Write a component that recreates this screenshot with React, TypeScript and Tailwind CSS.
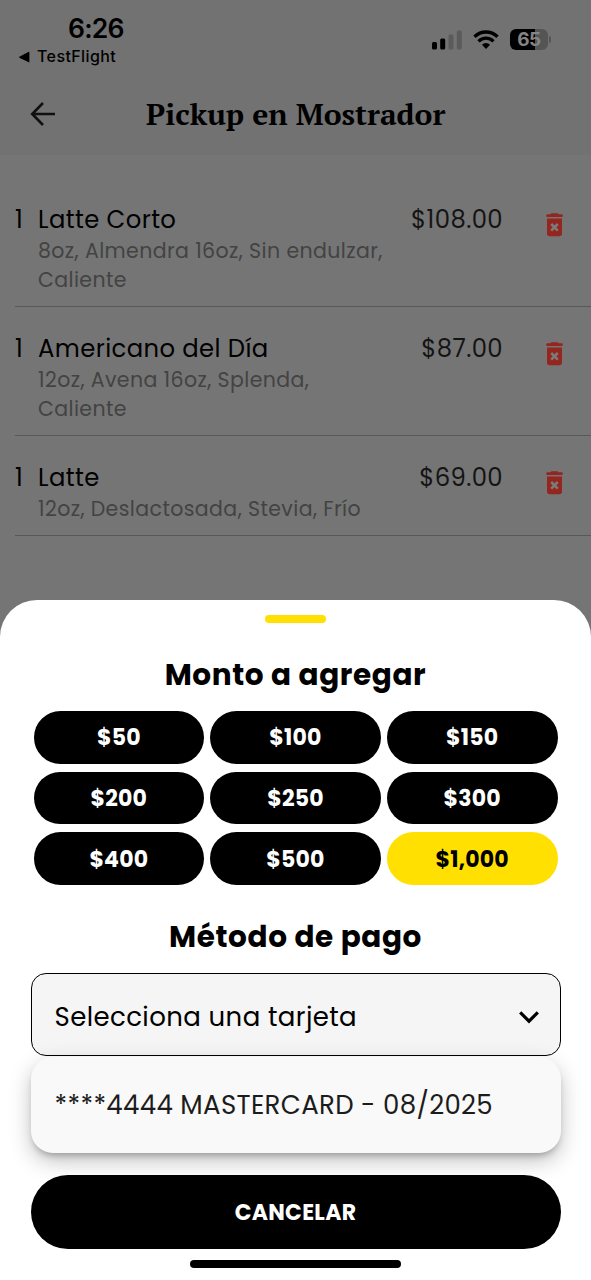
interface OrderItem {
  quantity: number;
  name: string;
  details: string[];
  price: string;
}

const items: OrderItem[] = [
  {
    quantity: 1,
    name: 'Latte Corto',
    details: ['8oz, Almendra 16oz, Sin endulzar,', 'Caliente'],
    price: '$108.00',
  },
  {
    quantity: 1,
    name: 'Americano del Día',
    details: ['12oz, Avena 16oz, Splenda,', 'Caliente'],
    price: '$87.00',
  },
  {
    quantity: 1,
    name: 'Latte',
    details: ['12oz, Deslactosada, Stevia, Frío'],
    price: '$69.00',
  },
];

const amounts = ['$50', '$100', '$150', '$200', '$250', '$300', '$400', '$500', '$1,000'];
const selectedAmount = '$1,000';

function StatusBar() {
  return (
    <div className="flex h-[72px] items-start justify-between pl-[19px] pr-[40px] font-['Inter',sans-serif]">
      <div className="pt-[12px]">
        <div className="pl-[49px] text-[26.5px] font-semibold leading-[32px] tracking-[-0.8px]">6:26</div>
        <div className="flex items-center gap-[7px] text-[16px] font-medium leading-[25px] tracking-[0.4px]">
          <svg width="11" height="12" viewBox="0 0 11 12">
            <path d="M10.4 1v10.400L.8 6.900q-1.200-.8 0-1.500L9.400 1q.6-.3 1 0z" fill="currentColor" />
          </svg>
          TestFlight
        </div>
      </div>
      <div className="flex items-center gap-[11px] pt-[29px]">
        {/* Signal */}
        <svg width="30" height="20" viewBox="0 0 30 20">
          <rect x="0" y="12" width="5" height="7.500" rx="1.500" />
          <rect x="8.200" y="8.500" width="5" height="11" rx="1.500" />
          <rect x="16.500" y="4.500" width="5" height="15" rx="1.500" fill="#5b5b5b" />
          <rect x="24.800" y="0.500" width="5" height="19" rx="1.500" fill="#5b5b5b" />
        </svg>
        {/* Wifi */}
        <svg width="26" height="20" viewBox="0 0 26 20" fill="none" stroke="currentColor">
          <path d="M1.500 6.700a16.300 16.300 0 0 1 23 0" strokeWidth="3.400" />
          <path d="M5.500 11.300a10.600 10.600 0 0 1 15 0" strokeWidth="3.200" />
          <path d="M13 19l-4-4.200a5.600 5.600 0 0 1 8 0z" fill="currentColor" stroke="none" />
        </svg>
        {/* Battery */}
        <div className="flex items-center gap-[1px]">
          <div className="flex h-[21px] w-[38px] items-center justify-center rounded-[6px] bg-[linear-gradient(90deg,#000_65%,#555_65%)] text-[19px] font-bold leading-none tracking-[-0.5px] text-[#848484]">
            65
          </div>
          <div className="h-[7px] w-[2px] rounded-r-full bg-[#555]" />
        </div>
      </div>
    </div>
  );
}

function TrashIcon() {
  return (
    <svg width="17" height="24" viewBox="0 0 17 24" fill="none">
      <path d="M4.500 1.300Q4.800.3 5.800.3h5.400q1 0 1.300 1h3.300q1 0 1 1.400t-1 1.300H1.200q-1 0-1-1.300t1-1.400z" fill="#942620" />
      <path d="M1 5.400h15v15.200q0 2.700-2.700 2.700H3.700Q1 23.300 1 20.600z" fill="#942620" />
      <path d="M5.200 11l6.600 6.600M11.800 11l-6.600 6.600" stroke="#7c7c7c" strokeWidth="2.500" />
    </svg>
  );
}

function OrderRow({ item }: { item: OrderItem }) {
  return (
    <div className="ml-[15px] flex border-b border-[#5c5659] pb-[12px] pt-[24px]">
      <div className="w-[23px] text-[24.3px] leading-[36px]">{item.quantity}</div>
      <div className="flex-1 whitespace-nowrap">
        <div className="h-[34px] text-[24.3px] leading-[36px] tracking-[0.4px]">{item.name}</div>
        {item.details.map((line) => (
          <div key={line} className="text-[20.5px] leading-[29px] tracking-[0.4px] text-[#434343]">
            {line}
          </div>
        ))}
      </div>
      <div className="text-[24.3px] leading-[36px] tracking-[0.4px] text-[#141414]">{item.price}</div>
      <button className="ml-[43px] mr-[28px] mt-[11px] h-6">
        <TrashIcon />
      </button>
    </div>
  );
}

function PaymentSheet() {
  return (
    <div className="flex h-[680px] flex-col items-center rounded-t-[37px] bg-white pt-[15px] text-black">
      <div className="h-2 w-[61px] rounded-full bg-[#ffe000]" />
      <h2 className="mt-[30px] text-[29.5px] font-bold leading-[44px] tracking-[0.6px]">Monto a agregar</h2>
      <div className="mt-[14px] grid w-[524px] grid-cols-3 gap-x-[6px] gap-y-2">
        {amounts.map((amount) => (
          <button
            key={amount}
            className={`h-[52.7px] rounded-full pt-px text-[22px] font-bold tracking-[0.2px] ${
              amount === selectedAmount ? 'bg-[#ffe000] text-black' : 'bg-black text-white'
            }`}
          >
            {amount}
          </button>
        ))}
      </div>
      <h2 className="mt-[30px] text-[29.5px] font-bold leading-[44px] tracking-[0.6px]">Método de pago</h2>
      <button className="mt-[14px] flex h-[83px] w-[530px] items-center justify-between rounded-[15px] border-[1.5px] border-black bg-[#f5f5f5] pl-[23px] pr-[21px] pt-[5px] text-[26px] tracking-[0.4px]">
        Selecciona una tarjeta
        <svg width="20" height="13" viewBox="0 0 20 13" fill="none" stroke="currentColor" strokeWidth="3.200">
          <path d="M1.200 1.400l8.800 8.800 8.800-8.800" />
        </svg>
      </button>
      <div className="relative mt-[1px] flex h-[96px] w-[530px] items-center whitespace-nowrap rounded-[22px] bg-[#f9f9f9] pl-[24px] text-[26px] tracking-[0.33px] text-[#1c1c1c] shadow-[0_5px_7px_-3px_rgba(0,0,0,0.28),0_8px_22px_0_rgba(0,0,0,0.24)]">
        ****4444 MASTERCARD - 08/2025
      </div>
      <button className="relative mt-[22px] h-[74px] w-[530px] shrink-0 rounded-full bg-black pt-px text-[22px] font-bold tracking-[0.3px] text-white">
        CANCELAR
      </button>
      <div className="mt-[11px] h-2 w-[211px] rounded-full bg-black" />
    </div>
  );
}

export default function App() {
  return (
    <div className="flex h-[1280px] w-[591px] flex-col overflow-hidden bg-[#757575] font-['Poppins','Inter',sans-serif] text-black">
      <header className="h-[155px] shrink-0 bg-[#727272]">
        <StatusBar />
        <div className="flex h-[84px] items-center">
          <button className="ml-[30px] text-[#101010]">
            <svg width="26" height="24" viewBox="0 0 26 24" fill="none" stroke="currentColor" strokeWidth="2.600">
              <path d="M25 12H3M13 1L2.200 12 13 23" />
            </svg>
          </button>
          <h1 className="ml-[90px] whitespace-nowrap font-['PT_Serif','Liberation_Serif',serif] text-[30px] font-bold leading-[44px]">
            Pickup en Mostrador
          </h1>
        </div>
      </header>

      <main className="flex-1 pt-[23px]">
        {items.map((item) => (
          <OrderRow key={item.name} item={item} />
        ))}
      </main>

      <PaymentSheet />
    </div>
  );
}
